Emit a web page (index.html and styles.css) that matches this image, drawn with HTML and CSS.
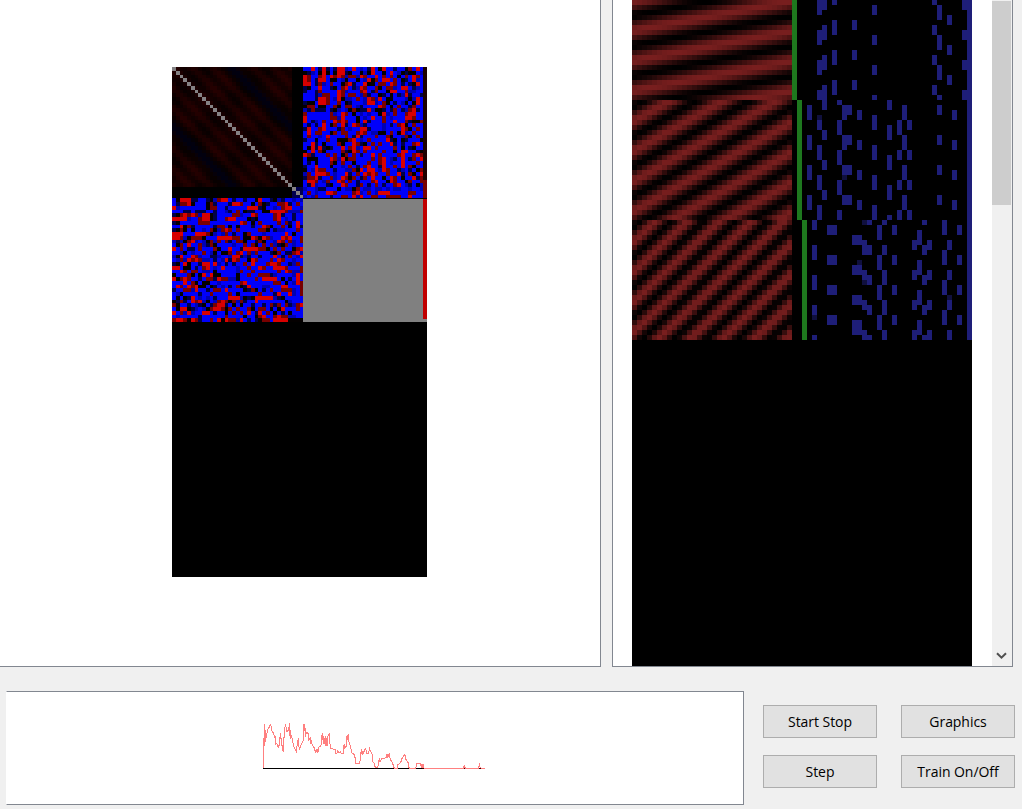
FILE: index.html
```html
<!DOCTYPE html>
<html lang="en">
<head>
<meta charset="utf-8">
<title>Network trainer</title>
<link rel="stylesheet" href="styles.css">
</head>
<body>
<div class="window">
  <div class="views">
    <section class="pane pane-weights"><canvas class="weights" id="weights" width="255" height="510"></canvas></section>
    <section class="pane pane-samples">
      <canvas class="samples" id="samples" width="340" height="666"></canvas>
      <div class="scrollbar">
        <div class="thumb"></div>
        <svg class="chevron" width="11" height="8" viewBox="0 0 11 8"><path d="M1 1.2 5.5 5.7 10 1.2" fill="none" stroke="#505050" stroke-width="2"/></svg>
      </div>
    </section>
  </div>
  <div class="controls">
    <section class="graph">
      <svg class="plot" width="235" height="60" viewBox="0 0 705 180" shape-rendering="crispEdges">
        <path d="M25 160.5H690" stroke="#000" stroke-width="3" fill="none"/>
        <path class="trace" d="M25.500 160V70H28V92V28V80H31V45V75L34 55V70L37 45L41 40L46 29L49 35L52 54L56 53L59 70L61 64V88L66 86L70 97L74 86V72L77 53V70H80V90H83V106H85V112V68H88V40L92 31L95 49H98V52L101 35V47L103 25V45L106 72V45V72L110 62L113 80L116 94L120 102L125 112L127 75V90L130 70V88L134 102L137 94L140 86L144 77V54L147 28V49L150 44V67L155 52L159 55L161 75L165 70V86L168 74V80L173 92L178 99L182 114L185 101V112L188 103V115L192 96L196 94L200 84V61L203 75V54L207 88L211 64V75L213 94V68L216 94V72L220 61L223 54V76L227 99H232L236 104H240V115H246L248 108L252 115L256 110L259 115H265V96L269 86V99L273 94V72L278 60V75L280 58V74L285 89L291 114L297 118V128H301V146H312L316 135V119L320 103V118L323 108V119L328 107L332 100L335 115H340L344 101L348 112L352 119V139L357 144L361 158H367L370 149V139L374 130V142L380 131L387 130L394 128V116L398 128V116V128L403 115V124L407 135L411 141L415 151V156L419 160H427V149L432 147L438 140V132L443 130L447 119L450 121V131L454 134L460 144V152L463 160H482L485 146H497V150L500 160V148V160L503 146V158L506 148V160H625L628 152L631 160H670L673 149L676 160H690"/>
        <path d="M626 161h5m42 0h5M500 160h7" stroke="#300" stroke-width="3"/>
      </svg>
    </section>
    <div class="buttons">
      <button class="button">Start Stop</button>
      <button class="button">Graphics</button>
      <button class="button">Step</button>
      <button class="button">Train On/Off</button>
    </div>
  </div>
</div>
<script src="app.js"></script>
</body>
</html>
```
FILE: styles.css
```css
* { box-sizing: border-box; }
body { margin: 0; background: #f0f0f0; overflow: hidden; font-family: "Noto Sans", "Open Sans", sans-serif; }
.window { width: 1022px; height: 809px; display: flex; flex-direction: column; gap: 24px; }
.views { display: flex; gap: 11px; height: 667px; }
.pane { background: #fff; border: 1px solid #828790; border-top: 0; display: flex; }
.pane-weights { width: 601px; border-left: 0; padding: 67px 0 0 172px; align-items: flex-start; }
.pane-samples { width: 401px; padding-left: 19px; justify-content: space-between; }
.weights, .samples { display: block; }
.scrollbar { width: 20px; background: #f0f0f0; display: flex; flex-direction: column; justify-content: space-between; padding: 1px 0 6px; }
.thumb { width: 19px; height: 204px; background: #cdcdcd; }
.chevron { display: block; margin-left: 4px; }
.controls { display: flex; padding-left: 6px; gap: 19px; }
.graph { width: 738px; height: 114px; background: #fff; border: 1px solid #828790; border-left-color: #fff; padding: 23px 0 0 248px; }
.plot { display: block; }
.trace { fill: none; stroke: #ff8080; stroke-width: 3; }
.buttons { display: grid; grid-template-columns: 114px 114px; grid-auto-rows: 33px; gap: 17px 24px; padding-top: 14px; align-content: start; }
.button { background: #e1e1e1; border: 1px solid #adadad; padding: 0; font: 14px/20px "Open Sans", "Noto Sans", sans-serif; letter-spacing: -0.05px; color: #000; white-space: nowrap; }
```
FILE: app.js
```js
// Colours of the signed weights, from strong negative to strong positive.
const tones = { B: '#0000fa', b: '#0000b4', n: '#000046', k: '#040000', r: '#780000', R: '#d80000' };
const cross = [
  'BBRBnRnBnRRbBRBbBnRBkRBBnBBkrBRB',
  'knbBkRkBkRRnkBBkbkRBBkBRBbknkkBb',
  'RrBBrRBRrRrbrrbRrBBRBrBrBkBrBRrB',
  'RrBnRRBkkBbkBBkBbRkrBRRBrBknBRbB',
  'RRBnrbBrBBkrRnBBRkkBrrBRrBnBnkRB',
  'nkBBRBBnkBrRBnbRrBBrkBrrbBRRBnbB',
  'nBBnrBBBBRrbBBBrRBnrBBkRRBBrbbBB',
  'BBBnbrrBBRrBrrBbrnBBknBkBnbRnBBn',
  'BBBnRRrBbRkbbBrBbRrbRBkkBBBbkbRB',
  'nkkBRRrBBrBknBBBbRRbBrkBnBbkBkRB',
  'krrBkkBBrkBrrBbnBBBBRrBkBrBBnrBB',
  'bnrnnnBnkbBbkrknnRbkknBnrBnbrRnB',
  'rBBBBBBrbBRrBkBbBbBBkRbBrBBrRRBB',
  'RBBBBBBrrbRBBBkBbBRBBrBbBBBRRrBB',
  'RBnbBrBBRrRrBBkBRnBBBrBBRBBrnkkr',
  'BnBnBRBkrBRnBRrbnBBBBbBnBrRkBrBB',
  'nRBBrRBBBnrBbBBRRnBBBbBBBBRrkBrB',
  'BRBrrBBkrBrrBBrRrBbbkkBrBkRbBrBB',
  'BrBBbBRBBBBrBnRnBBBrBBrkBBbrkBrB',
  'nBBkBBrBBkkkrRBbBrBBBBRnkBknBBBk',
  'BBRnBkBBBrkBBRrnkBrBrBBRnBnBBrRB',
  'BkRnRnknBBRBrRbBRRBrBBBBrBkBnkBB',
  'kBRBrkBBBBrnkRrBrBBBBrBBkBRRBBnk',
  'RrnBBBrBrBkrBrBnBBRBrBBBBrRBBrRr',
  'BkkkBBBRrbRkrrBBBBrBrRBbnBRBnrBR',
  'BnBkBBBrkBrBBkBBBrBBrRBbBBRBBBrB',
  'nBBRBBBkBBbBrBnBrRBBnRBBrBRBrkBB',
  'kBbRrrBBnBBbbrkRBRRBbRrBBnbBnBkr',
  'brBRRRrBbBBRnBrBRrRrBBrBBRnBrkBR',
  'nrrRnBBrbBRrkrBnrBRBBkBRrBkBBRnr',
  'BRRrBbrBBRrBrBnBBBrRBBkRrBBkrBBr',
  'BnRbBBnkBBRrBBnrBnBrBnBBrRBbnBkb',
  'bBBbnnBBBkBbbkrBbbBbbBbBbbBBbBBb',
  'BrBbBBRRrBBBBrRbBrBbRRRBBBBBrrBB',
  'bBbrBBBnBBrrBRbRBBrrBBrrrrBBRBBB'
];
const lastRow = 'rRRrkRrnBBrBRkRrrbRBnBnkrrBRRRRkkkk';
const weights = document.getElementById('weights').getContext('2d');
function cell(r, c, color) {
  const x = Math.round(c * 3.75), y = Math.round(r * 3.75);
  weights.fillStyle = color;
  weights.fillRect(x, y, Math.round((c + 1) * 3.75) - x, Math.round((r + 1) * 3.75) - y);
}
weights.fillStyle = '#000';
weights.fillRect(0, 0, 255, 510);
// Correlations between inputs, with the unit diagonal in grey.
for (let r = 0; r < 35; r++) {
  for (let c = 0; c < 35; c++) {
    if (r === c) { cell(r, c, '#848284'); continue; }
    if (r > 31 || c > 31) { if (r > 31 && c > 31) cell(r, c, '#000050'); continue; }
    const d = Math.abs(r - c);
    const dip = Math.exp(-Math.pow((d - 15.7) / 2.4, 2));
    const red = Math.max(0, (23 + 10 * Math.cos(d * Math.PI / 2.7) + 5 * Math.cos((r + c) / 2.6)) * (1 - dip));
    cell(r, c, `rgb(${Math.round(red)},0,${Math.round(30 * Math.max(0, dip - 0.45))})`);
  }
}
// Input/output correlations and their transpose.
for (let r = 0; r < 35; r++) {
  for (let c = 0; c < 32; c++) {
    const t = tones[cross[r][c]] || tones.B;
    cell(r, 35 + c, t);
    cell(35 + c, r, t);
  }
  cell(r, 67, r < 30 ? '#1c0000' : '#780000');
  cell(67, r, tones[lastRow[r]]);
}
weights.fillStyle = '#808080';
weights.fillRect(131, 132, 124, 123);
weights.fillStyle = '#c00000';
weights.fillRect(251, 132, 4, 120);

const samples = document.getElementById('samples').getContext('2d');
samples.fillStyle = '#000';
samples.fillRect(0, 0, 340, 666);
// Each block: first row, end row, vertical phase, waves across the 32 inputs.
[[0, 20, 5.6, 1], [20, 44, 23.65, 3], [44, 68, 47.7, 5]].forEach(([from, to, phase, waves], i) => {
  for (let r = from; r < to; r++) {
    for (let c = 0; c < 32; c++) {
      const v = 0.5 + 0.5 * Math.cos(2 * Math.PI * ((r - phase) / 6 + c * waves / 32));
      samples.fillStyle = `rgb(${Math.round(120 * v)},${Math.round(30 * v)},${Math.round(30 * v)})`;
      samples.fillRect(c * 5, r * 5, 5, 5);
    }
  }
  samples.fillStyle = '#1e781e';
  samples.fillRect(160 + i * 5, from * 5, 5, (to - from) * 5);
});
// Active output units: column, then the runs of rows.
const active = `37 0-2 6-8 12-14 18-19 24-25 29-31 35-37 41-43
38 0-1 5-7 11-13 17-21 26-27 32-33 38-39
40 0-0 4-6 10-12 16-18
44 4-5 10-11 16-17 47-48 53-54 59-60 64-66
48 1-2 7-8 13-14 19-19 23-25 29-31 35-37 41-43
60 0-0 5-6 11-12 17-18
61 1-3 7-9 13-15 19-19 21-22 27-28 33-34 39-40
63 3-4 9-10 15-16 48-49 54-55 60-61 66-67
66 0-1 6-7 12-13 18-19
67 0-67
35 21-23 27-29 33-35 39-41
41 20-20 24-26 30-32 36-38 42-43
42 21-23 27-29 33-34 39-40
43 21-22 27-28 33-34 39-40
45 22-23 28-29 34-35 40-41 47-48 53-54 59-60 64-66
51 20-21 25-27 31-33 37-39 43-43
53 24-26 30-31 36-37 42-43
54 21-23 27-29 33-35 39-41
55 24-25 30-31 36-37 42-43
64 22-23 28-29 34-35 40-41
36 44-45 49-51 55-57 61-62 67-67
39 45-46 51-52 57-58 63-64
40 45-46 51-52 57-58 63-64
46 48-50 54-55 60-61 66-67
47 44-44 49-50 55-56 61-62 67-67
49 45-47 51-53 57-59 63-65
50 44-44 49-50 54-56 60-62 66-67
52 45-46 51-52 57-58 63-64
56 48-49 54-55 60-61 66-67
57 46-48 52-54 58-60 64-66
58 44-44 49-50 55-56 61-62 67-67
59 48-49 54-55 60-61 66-67
62 44-46 50-52 56-58 62-64
65 45-46 51-52 57-58 63-64`;
// Weakly active units: row, column.
const faint = '23,37 35,42 44,46 52,45 56,46 59,63 63,36';
samples.fillStyle = '#10103e';
faint.split(' ').forEach(p => {
  const [r, c] = p.split(',');
  samples.fillRect(c * 5, r * 5, 5, 5);
});
samples.fillStyle = '#1e1e78';
active.split('\n').forEach(line => {
  const [col, ...runs] = line.split(' ');
  runs.forEach(run => {
    const [a, b] = run.split('-').map(Number);
    samples.fillRect(col * 5, a * 5, 5, (b - a + 1) * 5);
  });
});
```
